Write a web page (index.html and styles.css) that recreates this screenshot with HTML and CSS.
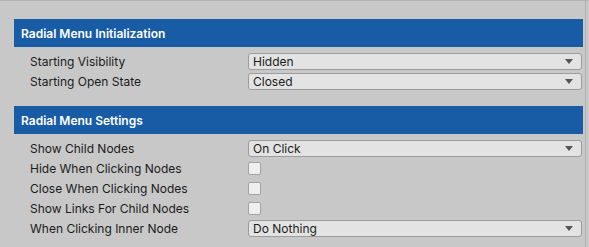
FILE: index.html
```html
<!DOCTYPE html>
<html lang="en">
<head>
<meta charset="UTF-8" />
<title>Radial Menu</title>
<link rel="stylesheet" href="styles.css">
</head>
<body>
  <div class="inspector">

    <!-- Initialization -->
    <div class="section">
      <div class="section-header">Radial Menu Initialization</div>
      <div class="row">
        <div class="label">Starting Visibility</div>
        <div class="dropdown"><span>Hidden</span><i class="arrow"></i></div>
      </div>
      <div class="row">
        <div class="label">Starting Open State</div>
        <div class="dropdown"><span>Closed</span><i class="arrow"></i></div>
      </div>
    </div>

    <!-- Settings -->
    <div class="section">
      <div class="section-header">Radial Menu Settings</div>
      <div class="row">
        <div class="label">Show Child Nodes</div>
        <div class="dropdown"><span>On Click</span><i class="arrow"></i></div>
      </div>
      <div class="row">
        <div class="label">Hide When Clicking Nodes</div>
        <div class="checkbox"></div>
      </div>
      <div class="row">
        <div class="label">Close When Clicking Nodes</div>
        <div class="checkbox"></div>
      </div>
      <div class="row">
        <div class="label">Show Links For Child Nodes</div>
        <div class="checkbox"></div>
      </div>
      <div class="row">
        <div class="label">When Clicking Inner Node</div>
        <div class="dropdown"><span>Do Nothing</span><i class="arrow"></i></div>
      </div>
    </div>

  </div>
</body>
</html>
```

FILE: styles.css
```css
* {
  box-sizing: border-box;
}

html, body {
  margin: 0;
  padding: 0;
  height: 100%;
  background: #c8c8c8;
  font-family: Inter, "Noto Sans", sans-serif;
  font-size: 12px;
  color: #1b1b1b;
}

body {
  border-top: 1px solid #b4b4b4;
}

.inspector {
  height: 100%;
  width: 586px;
  padding: 18px 2px 0 14px;
  border-right: 1px solid #b0b0b0;
}

.section + .section {
  margin-top: 15px;
}

.section-header {
  height: 28px;
  background: #175ca4;
  color: #ffffff;
  font-weight: 600;
  font-size: 12px;
  display: flex;
  align-items: center;
  padding-left: 7px;
  margin-bottom: 4px;
}

.row {
  height: 20px;
  display: flex;
  align-items: center;
}

.label {
  width: 234px;
  padding-left: 16px;
  white-space: nowrap;
}

.dropdown {
  width: 334px;
  height: 17px;
  background: #e3e3e3;
  border: 1px solid #9c9c9c;
  border-radius: 3px;
  display: flex;
  align-items: center;
  justify-content: space-between;
  padding: 0 8px 0 4px;
}

.arrow {
  width: 0;
  height: 0;
  border-left: 4px solid transparent;
  border-right: 4px solid transparent;
  border-top: 5px solid #555555;
}

.checkbox {
  width: 13px;
  height: 13px;
  background: #efefef;
  border: 1px solid #a2a2a2;
  border-radius: 2px;
}
```
